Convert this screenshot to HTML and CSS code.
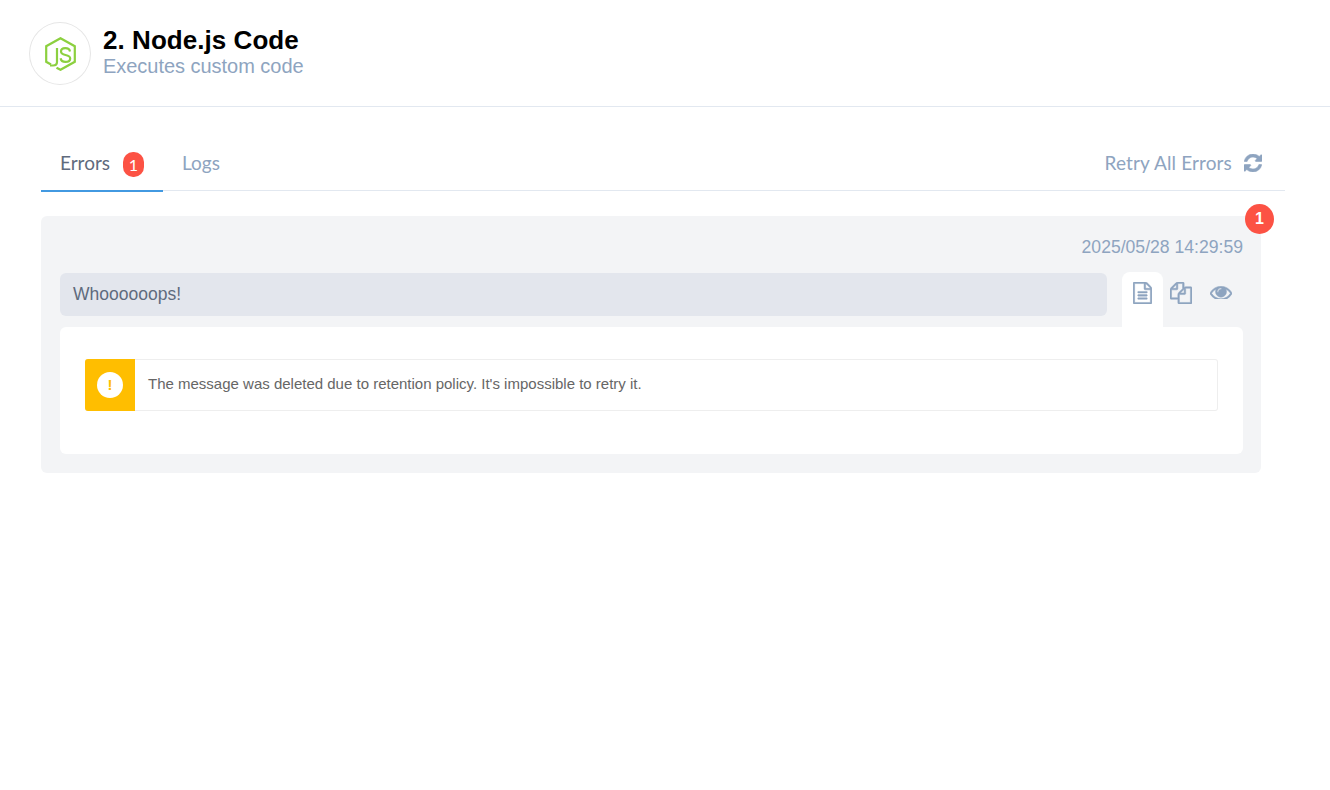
FILE: index.html
```html
<!DOCTYPE html>
<html lang="en">
<head>
<meta charset="utf-8">
<title>2. Node.js Code</title>
<link rel="stylesheet" href="styles.css">
</head>
<body>
<header class="header">
  <div class="logo">
    <svg class="logo-svg" viewBox="0 0 31 34" width="31" height="34" fill="none" stroke="#8cd03f" stroke-width="2.200">
      <path d="M11.500 30.700 L15.500 32.800 L29.800 24.800 V9.200 L15.500 1.200 L1.200 9.200 V24.800 L6 27.500"/>
      <path d="M12 11 V25 Q12 28.500 8 28.500 H5" stroke-width="2.200"/>
      <path d="M25 14.500 C24.500 12 22.500 11.200 20.300 11.200 C17.500 11.200 16 12.500 16 14.600 C16 16.800 18 17.500 20.500 18 C23.200 18.500 25.200 19.200 25.200 21.400 C25.200 23.600 23.200 24.800 20.400 24.800 C17.800 24.800 16 23.600 15.600 21.200" stroke-width="2.200"/>
    </svg>
  </div>
  <div class="heading">
    <h1 class="title">2. Node.js Code</h1>
    <p class="subtitle">Executes custom code</p>
  </div>
</header>
<main class="content">
  <nav class="tabs">
    <a class="tab tab-active">Errors <span class="tab-badge">1</span></a>
    <a class="tab">Logs</a>
    <a class="retry">Retry All Errors
      <svg class="retry-icon" viewBox="0 0 1536 1536" width="18" height="18"><path d="M1511 928q0 5-1 7-64 268-268 434.500t-478 166.500q-146 0-282.500-55t-243.500-157l-129 129q-19 19-45 19t-45-19-19-45v-448q0-26 19-45t45-19h448q26 0 45 19t19 45-19 45l-137 137q71 66 161 102t187 36q134 0 250-65t186-179q11-17 53-117 8-23 30-23h192q13 0 22.500 9.500t9.500 22.500zM1536 128v448q0 26-19 45t-45 19h-448q-26 0-45-19t-19-45 19-45l138-138q-148-137-349-137-134 0-250 65t-186 179q-11 17-53 117-8 23-30 23h-199q-13 0-22.500-9.500t-9.500-22.500v-7q65-268 270-434.500t480-166.500q146 0 284 55.500t245 156.500l130-129q19-19 45-19t45 19 19 45z"/></svg>
    </a>
  </nav>
  <section class="card">
    <span class="count">1</span>
    <div class="date">2025/05/28 14:29:59</div>
    <div class="message-row">
      <div class="message">Whoooooops!</div>
      <div class="actions">
        <button class="action action-active" type="button">
          <svg viewBox="128 0 1536 1792" width="19" height="22"><path d="M1596 380q28 28 48 76t20 88v1152q0 40-28 68t-68 28h-1344q-40 0-68-28t-28-68v-1600q0-40 28-68t68-28h896q40 0 88 20t76 48zm-444-244v376h376q-10-29-22-41l-313-313q-12-12-41-22zm384 1528v-1024h-416q-40 0-68-28t-28-68v-416h-768v1536h1280zm-1024-864q0-14 9-23t23-9h704q14 0 23 9t9 23v64q0 14-9 23t-23 9h-704q-14 0-23-9t-9-23v-64zm736 224q14 0 23 9t9 23v64q0 14-9 23t-23 9h-704q-14 0-23-9t-9-23v-64q0-14 9-23t23-9h704zm0 256q14 0 23 9t9 23v64q0 14-9 23t-23 9h-704q-14 0-23-9t-9-23v-64q0-14 9-23t23-9h704z"/></svg>
        </button>
        <button class="action" type="button">
          <svg viewBox="0 0 1792 1792" width="22" height="22"><path d="M1696 384q40 0 68 28t28 68v1216q0 40-28 68t-68 28h-960q-40 0-68-28t-28-68v-288h-544q-40 0-68-28t-28-68v-672q0-40 20-88t48-76l408-408q28-28 76-48t88-20h416q40 0 68 28t28 68v328q68-40 128-40h416zm-544 213l-299 299h299v-299zm-640-384l-299 299h299v-299zm194 647l316-316v-416h-384v416q0 40-28 68t-68 28h-416v640h512v-256q0-40 20-88t48-76zm956 804v-1152h-384v416q0 40-28 68t-68 28h-416v640h896z"/></svg>
        </button>
        <button class="action" type="button">
          <svg viewBox="0 384 1792 1024" width="22" height="13"><path d="M1664 960q-152-236-381-353 61 104 61 225 0 185-131.500 316.500t-316.500 131.500-316.500-131.500-131.500-316.500q0-121 61-225-229 117-381 353 133 205 333.500 326.500t434.500 121.500 434.500-121.500 333.500-326.500zm-720-384q0-20-14-34t-34-14q-125 0-214.500 89.500t-89.500 214.500q0 20 14 34t34 14 34-14 14-34q0-86 61-147t147-61q20 0 34-14t14-34zm848 384q0 34-20 69-140 230-376.500 368.500t-499.500 138.500-499.500-139-376.500-368q-20-35-20-69t20-69q140-229 376.500-368t499.500-139 499.500 139 376.500 368q20 35 20 69z"/></svg>
        </button>
      </div>
    </div>
    <div class="panel">
      <div class="alert">
        <div class="alert-side"><span class="alert-icon">!</span></div>
        <p class="alert-text">The message was deleted due to retention policy. It's impossible to retry it.</p>
      </div>
    </div>
  </section>
</main>
</body>
</html>
```
FILE: styles.css
```css
* { box-sizing: border-box; }
html, body { margin: 0; padding: 0; background: #fff; }
body { font-family: "Liberation Sans", Arial, sans-serif; }

.header {
  height: 107px;
  border-bottom: 1px solid #e2e8f0;
  padding: 22px 0 0 29px;
  display: flex;
  align-items: flex-start;
  gap: 12px;
}
.logo {
  width: 62px;
  height: 63px;
  border: 1px solid #e6e6e6;
  border-radius: 50%;
  display: flex;
  align-items: center;
  justify-content: center;
}
.title { margin: 0; padding-top: 3px; font-size: 26px; line-height: 30px; font-weight: 700; color: #000; letter-spacing: 0.050px; }
.subtitle { margin: 0; font-size: 20px; line-height: 22px; color: #8ea4c0; letter-spacing: -0.030px; }

.content { padding: 33px 45px 0 41px; }
.tabs {
  display: flex;
  align-items: flex-start;
  height: 51px;
  border-bottom: 1px solid #e2e8f0;
  font-family: "Lato", sans-serif;
  font-size: 19px;
}
.tab {
  display: flex;
  align-items: center;
  gap: 13px;
  padding: 0 19px 5px;
  color: #8ea4c0;
  height: 50px;
}
.tab-active { width: 122px; height: 52px; color: #5f6b7d; border-bottom: 2px solid #4299e1; padding-bottom: 5px; }
.tab-badge {
  width: 21px;
  height: 25px;
  margin-top: 3px;
  border-radius: 10px;
  background: #fc5244;
  color: #fff;
  font-size: 16px;
  display: flex;
  align-items: center;
  justify-content: center;
}
.retry {
  margin-left: auto;
  height: 50px;
  display: flex;
  align-items: center;
  gap: 12px;
  padding: 0 23px 5px 0;
  color: #8ea4c0;
  letter-spacing: 0.140px;
}
.retry-icon { fill: #8ea4c0; stroke: #8ea4c0; stroke-width: 50; }

.card {
  position: relative;
  width: 1220px;
  height: 257px;
  margin-top: 25px;
  padding: 18px 18px 19px 19px;
  background: #f3f4f6;
  border-radius: 6px;
}
.count {
  position: absolute;
  top: -12px;
  right: -13px;
  width: 29px;
  height: 30px;
  border-radius: 50%;
  background: #fc5244;
  color: #fff;
  font-size: 16px;
  font-weight: 700;
  display: flex;
  align-items: center;
  justify-content: center;
}
.date { text-align: right; font-size: 17.600px; line-height: 26px; color: #8ea4c0; }
.message-row { display: flex; align-items: flex-start; height: 55px; margin-top: 12px; }
.message {
  flex: none;
  width: 1047px;
  height: 43px;
  margin-top: 1px;
  padding-left: 13px;
  border-radius: 6px;
  background: #e3e6ed;
  color: #5f6b7d;
  font-size: 17.500px;
  line-height: 43px;
}
.actions { display: flex; margin-left: 15px; }
.action {
  width: 41px;
  height: 55px;
  padding: 10px 0 0;
  border: 0;
  background: transparent;
  display: flex;
  justify-content: center;
  align-items: flex-start;
  border-radius: 8px 8px 0 0;
}
.action svg { fill: #8ea4c0; stroke: #8ea4c0; stroke-width: 40; }
.action-active { background: #fff; }
.action:nth-child(2) { width: 35px; }
.action:nth-child(3) { width: 46px; padding-top: 14px; }
.panel { height: 127px; padding: 32px 25px 0; background: #fff; border-radius: 6px; }
.alert { display: flex; height: 52px; border: 1px solid #eee; border-left: 0; border-radius: 3px; }
.alert-side {
  width: 50px;
  margin: -1px 0;
  background: #ffbe00;
  border-radius: 3px 0 0 3px;
  display: flex;
  align-items: center;
  justify-content: center;
}
.alert-icon {
  width: 26px;
  height: 26px;
  border-radius: 50%;
  background: #fff;
  color: #ffbe00;
  font-size: 15px;
  font-weight: 700;
  line-height: 26px;
  text-align: center;
}
.alert-text { margin: 0; padding-left: 13px; font-size: 15px; line-height: 48px; color: #666; }
```
